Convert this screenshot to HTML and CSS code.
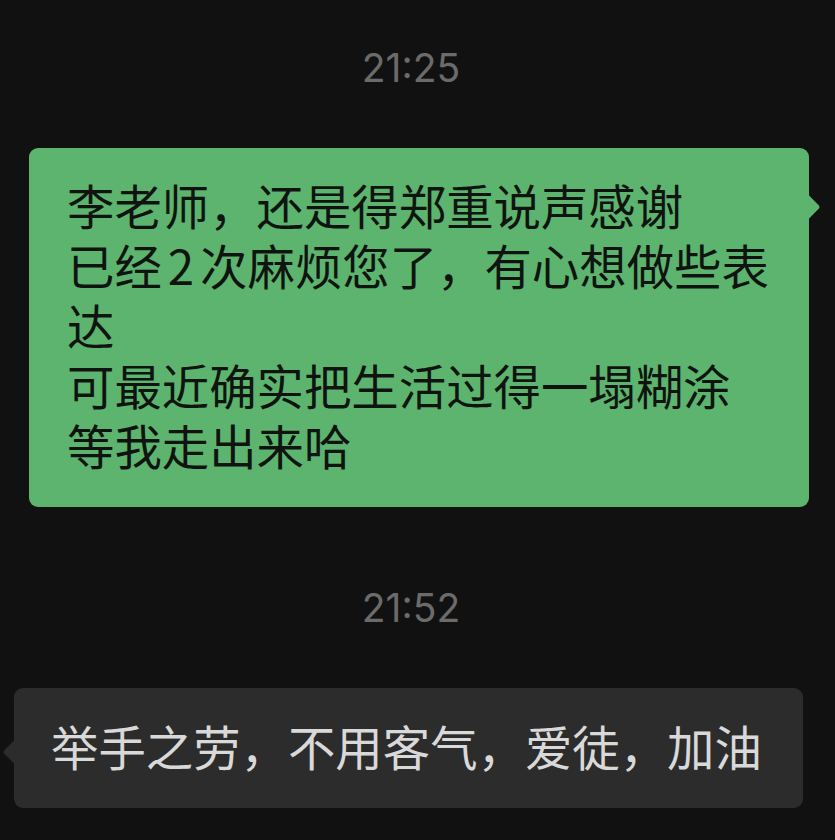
FILE: index.html
```html
<!DOCTYPE html>
<html lang="zh-CN">
<head>
<meta charset="utf-8">
<title>Chat</title>
<link rel="stylesheet" href="styles.css">
</head>
<body>
<main class="chat">
  <div class="time time-first">21:25</div>
  <div class="row row-right">
    <div class="bubble bubble-me">李老师，还是得郑重说声感谢<br>已经<span class="gap"></span>2<span class="gap"></span>次麻烦您了，有心想做些表<br>达<br>可最近确实把生活过得一塌糊涂<br>等我走出来哈</div>
  </div>
  <div class="time time-second">21:52</div>
  <div class="row row-left">
    <div class="bubble bubble-other">举手之劳，不用客气，爱徒，加油</div>
  </div>
</main>
</body>
</html>
```
FILE: styles.css
```css
html, body {
  margin: 0;
  padding: 0;
  background: #111111;
}
body {
  width: 835px;
  height: 840px;
  overflow: hidden;
}
.chat {
  display: flex;
  flex-direction: column;
}
.time {
  font-family: Inter, Roboto, "Liberation Sans", sans-serif;
  font-size: 39px;
  line-height: 44px;
  height: 44px;
  color: #6b6b6b;
  text-align: center;
  padding-right: 13px;
}
.time-first {
  margin-top: 46px;
}
.time-second {
  margin-top: 79px;
}
.row {
  display: flex;
}
.row-right {
  margin-top: 58px;
  padding-left: 29px;
}
.row-left {
  margin-top: 58px;
  padding-left: 14px;
}
.bubble {
  position: relative;
  box-sizing: border-box;
  font-family: "Noto Sans CJK SC", "Noto Sans", sans-serif;
  font-size: 47.4px;
  line-height: 60px;
  white-space: nowrap;
  border-radius: 9px;
  padding: 27px 0 32px 38px;
}
.gap {
  display: inline-block;
  width: 6px;
}
.bubble-me {
  width: 780px;
  height: 359px;
  background: #5db46e;
  color: #101410;
}
.bubble-other {
  width: 789px;
  height: 120px;
  background: #2c2c2c;
  color: #d9d9d9;
  padding-left: 37px;
  padding-top: 28px;
  padding-bottom: 32px;
}
.bubble::after {
  content: "";
  position: absolute;
  width: 22px;
  height: 22px;
  transform: rotate(45deg);
  border-radius: 3px;
}
.bubble-me::after {
  background: #5db46e;
  top: 48px;
  right: -7px;
}
.bubble-other::after {
  background: #2c2c2c;
  top: 53px;
  left: -7px;
}
```
